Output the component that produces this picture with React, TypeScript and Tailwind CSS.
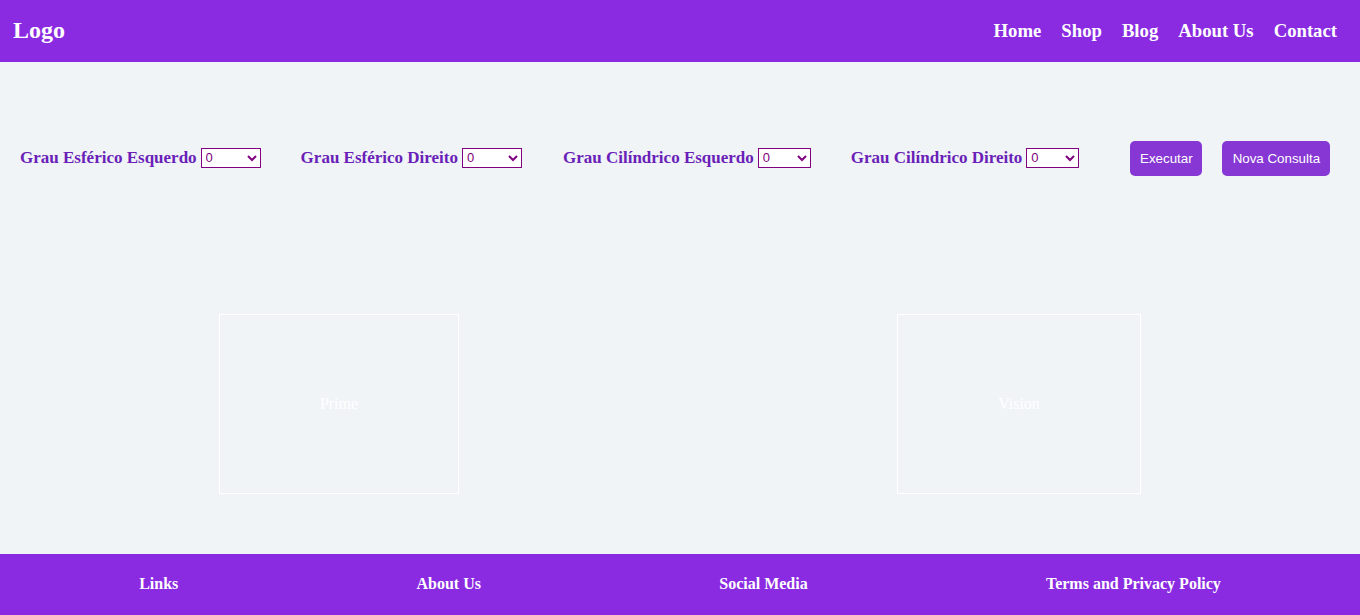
import React, { useState } from "react";

const NAV = ["Home", "Shop", "Blog", "About Us", "Contact"];
const FOOTER = ["Links", "About Us", "Social Media", "Terms and Privacy Policy"];
const FIELDS = [
  { label: "Grau Esférico Esquerdo", w: "w-[60px]", m: "" },
  { label: "Grau Esférico Direito", w: "w-[60px]", m: "" },
  { label: "Grau Cilíndrico Esquerdo", w: "w-[53px]", m: "ml-px" },
  { label: "Grau Cilíndrico Direito", w: "w-[53px]", m: "" },
];
const OPTIONS = ["0", "0.25", "0.5", "0.75", "1", "1.25", "1.5", "1.75", "2"];

const serif = "font-['Liberation_Serif',serif]";
const sans = "font-['Liberation_Sans',sans-serif]";

export default function App() {
  const [values, setValues] = useState<string[]>(["0", "0", "0", "0"]);

  return (
    <div className={`min-h-[615px] flex flex-col bg-[#f0f4f7] ${serif}`}>
      {/* Header */}
      <header className="h-[62px] flex items-center justify-between bg-[#8a2be2] pl-[13px] pr-[23px] text-white">
        <h1 className="text-[24px] font-bold leading-none mb-[2px]">Logo</h1>
        <nav className="flex gap-5">
          {NAV.map(n => (
            <a key={n} className="text-[18.72px] font-bold leading-none cursor-pointer">
              {n}
            </a>
          ))}
        </nav>
      </header>

      {/* Main */}
      <main className="h-[492px] flex flex-col">
        <div className="mt-[79px] h-[35px] flex items-center pl-5">
          <div className="flex items-center gap-10 pb-[2px]">
            {FIELDS.map((f, i) => (
              <label key={f.label} className={`flex items-center gap-1 text-[17px] font-bold text-[#6a1fb8] ${f.m}`}>
                {f.label}
                <select
                  value={values[i]}
                  onChange={e => {
                    const next = [...values];
                    next[i] = e.target.value;
                    setValues(next);
                  }}
                  className={`${f.w} h-[20px] border border-[#800080] bg-white text-[#800080] text-[13px] font-normal ${sans}`}
                >
                  {OPTIONS.map(o => (
                    <option key={o}>{o}</option>
                  ))}
                </select>
              </label>
            ))}
          </div>
          <button className={`ml-[51px] h-[35px] w-[72px] rounded-[5px] bg-[#8737d3] text-white text-[13.33px] ${sans}`}>
            Executar
          </button>
          <button className={`ml-5 h-[35px] w-[108px] rounded-[5px] bg-[#8737d3] text-white text-[13.33px] ${sans}`}>
            Nova Consulta
          </button>
        </div>

        <div className="mt-[138px] flex justify-around">
          <div className="w-[240px] h-[180px] border border-white flex items-center justify-center text-white text-[16px]">
            Prime
          </div>
          <div className="w-[244px] h-[180px] border border-white flex items-center justify-center text-white text-[16px]">
            Vision
          </div>
        </div>
      </main>

      {/* Footer */}
      <footer className="h-[61px] flex items-center justify-around bg-[#8a2be2] px-5 pb-[2px] text-white">
        {FOOTER.map(f => (
          <span key={f} className="text-[16px] font-bold">
            {f}
          </span>
        ))}
      </footer>
    </div>
  );
}
